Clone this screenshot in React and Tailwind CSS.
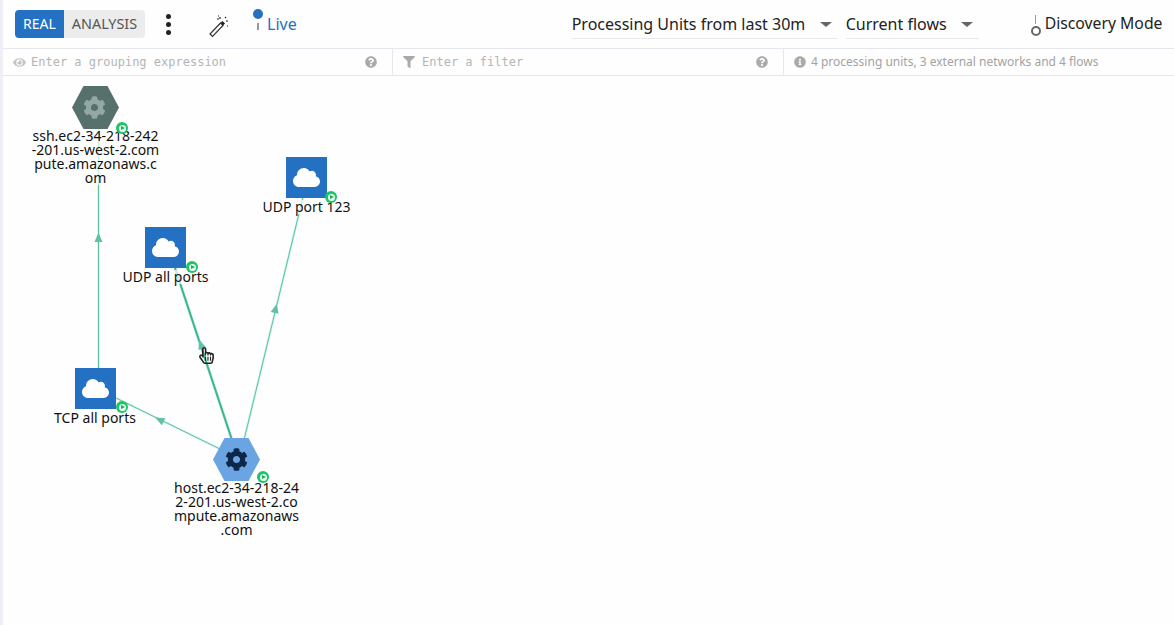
import { FaCog, FaCloud, FaEye, FaFilter, FaQuestionCircle, FaInfoCircle, FaRegHandPointer } from "react-icons/fa";

const font = { fontFamily: '"Noto Sans", sans-serif' };

const links = [
  { x1: 98.5, y1: 128, x2: 98.5, y2: 368, ax: 98.5, ay: 238, w: 1 },
  { x1: 175, y1: 268, x2: 232, y2: 440, ax: 201, ay: 345, w: 2 },
  { x1: 303, y1: 197, x2: 244, y2: 440, ax: 275.5, ay: 309, w: 1 },
  { x1: 116, y1: 398, x2: 220, y2: 449, ax: 160, ay: 420, w: 1 },
];

function Edges() {
  return (
    <svg className="absolute left-0 top-0 h-full w-full" viewBox="0 0 1171 549">
      {links.map((l, i) => {
        const angle = (Math.atan2(l.y1 - l.y2, l.x1 - l.x2) * 180) / Math.PI + 90;
        return (
          <g key={i} transform="translate(-3 -76)">
            <line x1={l.x1} y1={l.y1} x2={l.x2} y2={l.y2} stroke="#d3f5ee" strokeWidth={l.w + 1.5} />
            <line x1={l.x1} y1={l.y1} x2={l.x2} y2={l.y2} stroke={l.w > 1 ? "#3fb38f" : "#5cbfa4"} strokeWidth={l.w} />
            <polygon
              points="0,-5.5 4,4 -4,4"
              fill="#62c0a4"
              transform={`translate(${l.ax} ${l.ay}) rotate(${angle})`}
            />
          </g>
        );
      })}
    </svg>
  );
}

function PlayDot({ className }) {
  return (
    <span className={`absolute flex h-[12px] w-[12px] items-center justify-center rounded-full bg-[#1fc466] ${className}`}>
      <span className="flex h-[7px] w-[7px] items-center justify-center rounded-full bg-[#e8fff2]">
        <span className="ml-px h-0 w-0 border-y-[2.5px] border-l-[4px] border-y-transparent border-l-[#1fa866]" />
      </span>
    </span>
  );
}

function Hexagon({ fill, gear, gearLeft }) {
  return (
    <div className="relative h-[43px] w-[47px]">
      <svg className="h-full w-full" viewBox="0 0 47 43">
        <polygon points="11.5,0 35.5,0 47,21.5 35.5,43 11.5,43 0,21.5" fill={fill} />
      </svg>
      <FaCog className={`absolute top-[10px] ${gearLeft}`} size={23} color={gear} />
    </div>
  );
}

function CloudBox() {
  return (
    <div className="mb-[2px] flex h-[41px] w-[41px] items-center justify-center bg-[#2470c2]">
      <FaCloud size={27} color="#fff" />
    </div>
  );
}

function Node({ left, top, width, children, dot, lines }) {
  return (
    <div className="absolute flex flex-col items-center" style={{ left, top, width }}>
      {children}
      <PlayDot className={dot} />
      {lines.map((line) => (
        <span key={line} className="whitespace-nowrap bg-[#fefefe]/70 text-[14px] leading-[14px] text-[#111]">
          {line}
        </span>
      ))}
    </div>
  );
}

function FilterCell({ width, icon, text, help }) {
  return (
    <div className={`flex h-full items-center border-r border-[#e6e6ee] pl-[10px] pr-[15px] ${width}`}>
      {icon}
      <span className="flex-1 font-['DejaVu_Sans_Mono',monospace] text-[12px] text-[#b5b5b5]">{text}</span>
      {help && <FaQuestionCircle size={12} color="#aaa" />}
    </div>
  );
}

export default function App() {
  return (
    <div className="relative flex h-[625px] w-full flex-col overflow-hidden border-l-[3px] border-[#eeeef6] bg-[#fefefe]" style={font}>
      {/* Toolbar */}
      <header className="flex h-[48px] items-center pl-[12px] text-[#222]">
        <div className="flex h-[28px] w-[130px] overflow-hidden rounded text-[14px] leading-[28px]">
          <span className="w-[49px] bg-[#2470c2] text-center text-white">REAL</span>
          <span className="flex-1 bg-[#ececec] text-center text-[14.4px] text-[#555]">ANALYSIS</span>
        </div>
        <div className="ml-[21px] flex w-[6px] flex-col gap-[3px]">
          <span className="h-[5px] w-[5px] rounded-full bg-[#222]" />
          <span className="h-[5px] w-[5px] rounded-full bg-[#222]" />
          <span className="h-[5px] w-[5px] rounded-full bg-[#222]" />
        </div>
        <svg className="ml-[35px] mt-[3px]" width="22" height="24" viewBox="0 0 22 24" fill="none">
          <path d="M13.5 9 L3 20 L5.5 22.5 L16 11.5 Z" stroke="#333" strokeWidth="1.2" fill="#fff" />
          <path d="M13.5 9 L16 11.5 L18 9.5 L15.5 7 Z" fill="#222" />
          <path d="M10 5h2M13 3v2M18 3l1 1M19 7h2M20 12h1M11 2h1" stroke="#222" strokeWidth="1.2" />
        </svg>
        <div className="ml-[24px] flex h-[30px] w-[10px] flex-col items-center">
          <span className="h-[10px] w-[10px] rounded-full bg-[#2470c2]" />
          <span className="mt-[4px] h-[7px] w-[1.5px] bg-[#999]" />
        </div>
        <span className="ml-[4px] text-[16px] text-[#2470c2]">Live</span>

        <div className="ml-[275px] flex h-[39px] w-[266px] shrink-0 items-center justify-between self-start border-b border-[#e8e8ee] pr-[6px] pt-[10px] text-[16px] leading-[29px]">
          <span>Processing Units from last 30m</span>
          <span className="h-0 w-0 border-x-[6px] border-t-[5px] border-x-transparent border-t-[#666]" />
        </div>
        <div className="ml-[8px] flex h-[39px] w-[133px] shrink-0 items-center justify-between self-start border-b border-[#e8e8ee] pr-[6px] pt-[10px] text-[16px] leading-[29px]">
          <span>Current flows</span>
          <span className="h-0 w-0 border-x-[6px] border-t-[5px] border-x-transparent border-t-[#666]" />
        </div>
        <div className="ml-[52px] mt-[4px] flex h-[22px] w-[10px] shrink-0 flex-col items-center">
          <span className="h-[9px] w-[1.5px] bg-[#999]" />
          <span className="mt-[2px] h-[10px] w-[10px] rounded-full border-2 border-[#666] bg-white" />
        </div>
        <span className="ml-[4px] whitespace-nowrap text-[15.75px]">Discovery Mode</span>
      </header>

      {/* Filter bar */}
      <div className="flex h-[28px] border-y border-[#e6e6ee]">
        <FilterCell width="w-[390px]" icon={<FaEye size={13} color="#c4c4c4" className="mr-[5px]" />} text="Enter a grouping expression" help />
        <FilterCell width="w-[391px]" icon={<FaFilter size={12} color="#aaa" className="mr-[7px]" />} text="Enter a filter" help />
        <div className="flex flex-1 items-center pl-[10px] text-[12px] text-[#a3a3a3]">
          <FaInfoCircle size={12} color="#aaa" />
          <span className="ml-[5px]">4 processing units, 3 external networks and 4 flows</span>
        </div>
      </div>

      {/* Graph canvas */}
      <main className="relative flex-1">
        <Edges />
        <Node left={29} top={10} width={127} dot="left-[84px] top-[36px]" lines={["ssh.ec2-34-218-242", "-201.us-west-2.com", "pute.amazonaws.c", "om"]}>
          <Hexagon fill="#56706b" gear="#93a7a3" gearLeft="left-[11px]" />
        </Node>
        <Node left={253} top={81} width={101} dot="left-[69px] top-[34px]" lines={["UDP port 123"]}>
          <CloudBox />
        </Node>
        <Node left={113} top={151} width={99} dot="left-[70px] top-[34px]" lines={["UDP all ports"]}>
          <CloudBox />
        </Node>
        <Node left={42} top={292} width={100} dot="left-[71px] top-[33px]" lines={["TCP all ports"]}>
          <CloudBox />
        </Node>
        <Node left={170} top={362} width={127} dot="left-[84px] top-[33px]" lines={["host.ec2-34-218-24", "2-201.us-west-2.co", "mpute.amazonaws", ".com"]}>
          <Hexagon fill="#6ba4e3" gear="#0d2748" gearLeft="left-[12px]" />
        </Node>
        <FaRegHandPointer className="absolute left-[195px] top-[271px]" size={17} color="#222" />
      </main>
    </div>
  );
}
